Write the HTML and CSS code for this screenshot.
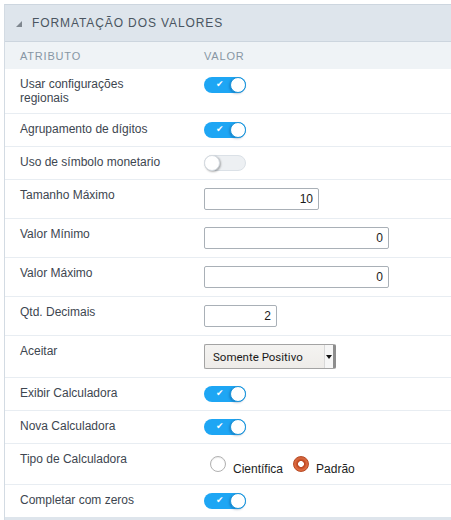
FILE: index.html
```html
<!DOCTYPE html>
<html lang="pt">
<head>
<meta charset="utf-8">
<link rel="stylesheet" href="styles.css">
</head>
<body>
<div class="panel">
  <div class="panel-head"><span class="tri"></span><span class="title">FORMATAÇÃO DOS VALORES</span></div>
  <div class="cols"><div class="c-lbl">ATRIBUTO</div><div class="c-val">VALOR</div></div>

  <div class="row"><div class="lbl">Usar configurações regionais</div><div class="val"><span class="tg on"><span class="chk">✔</span><span class="knob"></span></span></div></div>
  <div class="row"><div class="lbl">Agrupamento de dígitos</div><div class="val"><span class="tg on"><span class="chk">✔</span><span class="knob"></span></span></div></div>
  <div class="row"><div class="lbl">Uso de símbolo monetario</div><div class="val"><span class="tg off"><span class="knob"></span></span></div></div>
  <div class="row"><div class="lbl">Tamanho Máximo</div><div class="val"><div class="inp w115">10</div></div></div>
  <div class="row"><div class="lbl">Valor Mínimo</div><div class="val"><div class="inp w185">0</div></div></div>
  <div class="row"><div class="lbl">Valor Máximo</div><div class="val"><div class="inp w185">0</div></div></div>
  <div class="row"><div class="lbl">Qtd. Decimais</div><div class="val"><div class="inp w73">2</div></div></div>
  <div class="row"><div class="lbl">Aceitar</div><div class="val"><div class="sel"><span class="sel-text">Somente Positivo</span><span class="sel-btn"><span class="arrow"></span></span></div></div></div>
  <div class="row"><div class="lbl">Exibir Calculadora</div><div class="val"><span class="tg on"><span class="chk">✔</span><span class="knob"></span></span></div></div>
  <div class="row"><div class="lbl">Nova Calculadora</div><div class="val"><span class="tg on"><span class="chk">✔</span><span class="knob"></span></span></div></div>
  <div class="row"><div class="lbl">Tipo de Calculadora</div><div class="val"><div class="radios"><span class="radio"></span><span class="rlbl">Científica</span><span class="radio checked"></span><span class="rlbl">Padrão</span></div></div></div>
  <div class="row last"><div class="lbl">Completar com zeros</div><div class="val"><span class="tg on"><span class="chk">✔</span><span class="knob"></span></span></div></div>
  <div class="foot"></div>
</div>
</body>
</html>
```
FILE: styles.css
```css
html, body { margin: 0; padding: 0; background: #fff; }
body { font-family: "Liberation Sans", Arial, sans-serif; font-size: 12px; color: #3d4650; }

.panel {
  margin: 4px 0 0 4px;
  border-left: 1px solid #d3dbe3;
  border-top: 1px solid #cdd6df;
}

.panel-head {
  height: 36px;
  background: #dee5ec;
  border-bottom: 1px solid #ccd5de;
  display: flex;
  align-items: center;
  padding-left: 11px;
}
.tri {
  width: 0; height: 0;
  border-style: solid;
  border-width: 0 0 6px 6px;
  border-color: transparent transparent #7f878f transparent;
  margin-right: 10px;
  margin-top: 1px;
}
.title { font-size: 12px; letter-spacing: 0.9px; color: #4a5561; }

.cols {
  height: 27px;
  background: #eff3f6;
  display: grid;
  grid-template-columns: 184px 1fr;
  align-items: center;
  font-size: 11px;
  letter-spacing: 0.8px;
  color: #8796a4;
  padding-left: 15px;
}

.row {
  display: grid;
  grid-template-columns: 184px 1fr;
  padding: 8px 0 8px 15px;
  border-bottom: 1px solid #e8edf2;
  align-items: start;
}
.row.last { border-bottom: none; }
.lbl { line-height: 14px; padding-right: 40px; }
.val { display: flex; align-items: center; }

.tg {
  position: relative;
  display: inline-block;
  width: 42px; height: 16px;
  border-radius: 8px;
  box-sizing: border-box;
}
.tg.on { background: #1ea6f4; }
.tg.off { background: #edf0f3; border: 1px solid #dbe1e7; }
.knob {
  position: absolute;
  top: 0; width: 16px; height: 16px;
  border-radius: 50%;
  background: #fff;
  box-sizing: border-box;
}
.tg.on .knob { right: 0; border: 1px solid #1a93d9; box-shadow: -1px 1px 2px rgba(0,40,90,0.25); }
.tg.off .knob { left: -1px; top: -1px; border: 1px solid #d5dbe1; box-shadow: 1px 1px 2px rgba(0,0,0,0.3); }
.chk {
  position: absolute;
  left: 12px; top: 2px;
  font-size: 9px; line-height: 10px;
  font-weight: bold;
  color: #fff;
  font-family: "DejaVu Sans", sans-serif;
}

.inp {
  height: 22px;
  box-sizing: border-box;
  border: 1px solid #a9b0b7;
  border-radius: 2px;
  background: #fff;
  text-align: right;
  padding-right: 5px;
  line-height: 21px;
  font-size: 12px;
  color: #1a1a1a;
}
.w115 { width: 115px; }
.w185 { width: 185px; }
.w73 { width: 73px; }

.sel {
  width: 132px; height: 25px;
  box-sizing: border-box;
  border: 1px solid #a3a3a3;
  border-right: 3px solid #8d8d8d;
  border-radius: 2px;
  background: linear-gradient(#f4f3f1, #eeece9);
  display: flex;
  align-items: center;
}
.sel-text { flex: 1; padding-left: 8px; font-family: Roboto, "Liberation Sans", sans-serif; font-size: 11.5px; color: #1a1a1a; }
.sel-btn {
  width: 8px; height: 23px;
  border-left: 1px solid #d8d8d8;
  background: #f6f6f6;
  display: flex; align-items: center; justify-content: center;
}
.arrow {
  width: 0; height: 0;
  border-left: 3px solid transparent;
  border-right: 3px solid transparent;
  border-top: 4px solid #111;
}

.radios { display: flex; align-items: flex-end; height: 24px; padding-left: 6px; }
.radio {
  width: 16px; height: 16px;
  box-sizing: border-box;
  border-radius: 50%;
  border: 1px solid #b1b1b1;
  background: #fff;
  margin-bottom: 4px;
  box-shadow: inset 0 1px 1px rgba(0,0,0,0.08);
}
.radio.checked {
  border: 1px solid #b84b25;
  background: radial-gradient(circle, #fff 0, #fff 2.6px, #b94521 3.2px, #c9532b 4.4px, #df6c41 6px, #d86237 8px);
}
.rlbl { font-size: 12px; line-height: 14px; color: #1d1d1d; margin-left: 7px; margin-right: 10px; }

.foot { height: 6px; background: #dee5ec; }
```
